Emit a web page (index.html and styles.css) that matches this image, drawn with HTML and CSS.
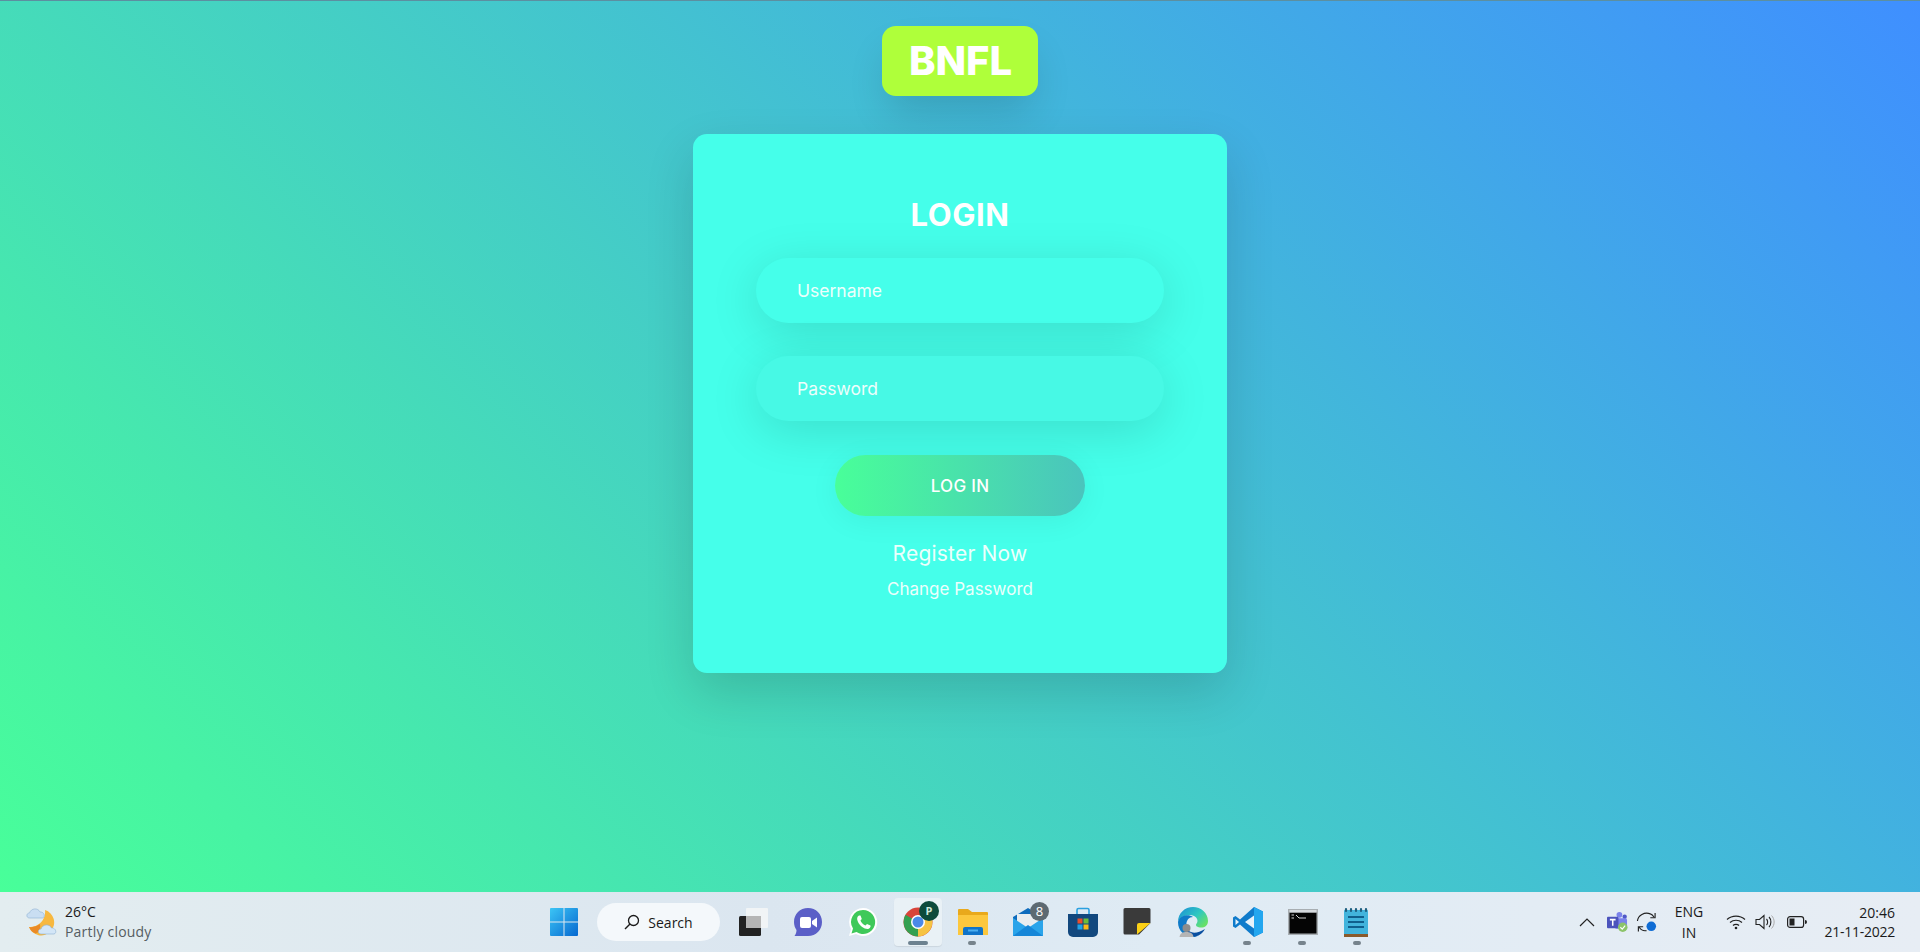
FILE: index.html
```html
<!doctype html>
<html lang="en">
<head>
	<meta charset="UTF-8">
	<title>BNFL Login</title>
	<link rel="stylesheet" href="styles.css">
</head>
<body>
	<main class="page">
		<div class="logo">BNFL</div>
		<form class="card" action="#">
			<h2 class="card-title">LOGIN</h2>
			<input class="field" type="text" placeholder="Username">
			<input class="field field-pass" type="password" placeholder="Password">
			<button class="login-btn" type="button">LOG IN</button>
			<a class="link-big" href="#">Register Now</a>
			<a class="link-small" href="#">Change Password</a>
		</form>
	</main>
	<footer class="taskbar">
		<div class="weather">
			<svg class="weather-icon" viewBox="0 0 32 32">
				<path d="M19 4 A13 13 0 1 1 3 21 A15 15 0 0 0 19 4Z" fill="#f7b83f"/>
				<path d="M3 21 A15 15 0 0 0 14 18 C15 24 12 27 9.500 27.500 C6.500 26.500 4.500 24.500 3 21Z" fill="#ea8a26"/>
				<path d="M3.500 12 C0 12 0 7 3.500 7 C5 2 12 1.500 14 6 C18 5.500 20 11 16.500 12Z" fill="#c9def2" stroke="#8fb2d4" stroke-width=".6"/>
				<path d="M15 28 C11.500 28 11.500 23 15 23 C16.500 18 23.500 17.500 25.500 22 C29.500 21.500 31.500 27 28 28Z" fill="#d3e6f7" stroke="#8fb2d4" stroke-width=".6"/>
			</svg>
			<div class="weather-text">
				<div class="temp">26°C</div>
				<div class="cond">Partly cloudy</div>
			</div>
		</div>
		<div class="apps">
			<div class="slot slot-win">
				<svg class="icon" viewBox="0 0 30 30">
					<defs>
						<linearGradient id="win" x1="0" y1="0" x2="1" y2="1"><stop offset="0" stop-color="#3cc5f5"/><stop offset="1" stop-color="#0668d0"/></linearGradient>
					</defs>
					<path d="M1 2 a1 1 0 0 1 1-1 H14.500 V14.500 H1Z M15.500 1 H28 a1 1 0 0 1 1 1 V14.500 H15.500Z M1 15.500 H14.500 V29 H2 a1 1 0 0 1-1-1Z M15.500 15.500 H29 V28 a1 1 0 0 1-1 1 H15.500Z" fill="url(#win)"/>
				</svg>
			</div>
			<div class="search">
				<svg class="search-icon" viewBox="0 0 16 16"><circle cx="9.500" cy="6.500" r="5" fill="none" stroke="#1a1a1a" stroke-width="1.300"/><path d="M6 10 L1 15" stroke="#1a1a1a" stroke-width="1.500"/></svg>
				<span>Search</span>
			</div>
			<div class="slot">
				<svg class="icon" viewBox="0 0 30 30">
					<rect x="1" y="9" width="22" height="20" rx="1.500" fill="#222"/>
					<rect x="8" y="1" width="22" height="20" rx="1" fill="#f1f4f6"/>
					<rect x="8" y="9" width="15" height="12" fill="#b5b5b5"/>
				</svg>
			</div>
			<div class="slot">
				<svg class="icon" viewBox="0 0 30 30">
					<path d="M15 1 C23 1 29 7 29 15 C29 23 23 29 15 29 H1.500 C3 27 3.500 25 3.500 23 C2 21 1 18 1 15 C1 7 7 1 15 1Z" fill="#5b5fc7"/>
					<rect x="7" y="10" width="11" height="11" rx="2" fill="#fff"/>
					<path d="M19 14 L24 10.500 V20.500 L19 17Z" fill="#fff"/>
				</svg>
			</div>
			<div class="slot">
				<svg class="icon" viewBox="0 0 30 30">
					<path d="M15 1 A14 14 0 1 1 8 27 L1 29 L3 22 A14 14 0 0 1 15 1Z" fill="#fff"/>
					<path d="M15 3 A12 12 0 1 1 8.500 25 L3.500 26.500 L5 21.500 A12 12 0 0 1 15 3Z" fill="#3fc95a"/>
					<path d="M11 8.500 C9 9.500 8.500 12 10 15 C12 19 16 22 19.500 22 C21.500 22 23 20 22.500 18.500 L19 17 L17.500 18.500 C15.500 18 13 15.500 12.500 13.500 L13.800 12 L12.500 8.500Z" fill="#fff"/>
				</svg>
			</div>
			<div class="slot slot-open">
				<svg class="icon" viewBox="0 0 30 30">
					<circle cx="15" cy="15" r="14.500" fill="#d9443a"/>
					<path d="M15 15 L27.500 7.800 A14.500 14.500 0 0 1 15 29.500Z" fill="#f6c343"/>
					<path d="M15 15 L15 29.500 A14.500 14.500 0 0 1 2.500 7.800Z" fill="#34a050"/>
					<circle cx="15" cy="15" r="7" fill="#fff"/>
					<circle cx="15" cy="15" r="5.500" fill="#4a89e8"/>
				</svg>
				<span class="profile">P</span>
				<span class="dash"></span>
			</div>
			<div class="slot slot-run">
				<svg class="icon" viewBox="0 0 30 30">
					<path d="M0 3 a1 1 0 0 1 1-1 H10 L14 5 H29 a1 1 0 0 1 1 1 V10 H0Z" fill="#e9a91c"/>
					<path d="M0 8 H30 V28 H0Z" fill="#fcc73d"/>
					<path d="M5 28 V22 a2 2 0 0 1 2-2 H23 a2 2 0 0 1 2 2 V28Z" fill="#0f73c9"/>
					<rect x="10" y="22.500" width="10" height="2" fill="#4aaef0"/>
				</svg>
				<span class="dot"></span>
			</div>
			<div class="slot">
				<svg class="icon" viewBox="0 0 30 30">
					<path d="M0 10 L15 1 L30 10 V29 H0Z" fill="#0f6cbd"/>
					<path d="M4 7 H27 V19 L15 25 L4 19Z" fill="#e9edf0"/>
					<path d="M0 11 L15 21 L30 11 V29 H0Z" fill="#2aa4ea"/>
					<path d="M0 29 L15 18 L30 29Z" fill="#1586d8"/>
				</svg>
				<span class="badge">8</span>
			</div>
			<div class="slot">
				<svg class="icon" viewBox="0 0 30 30">
					<path d="M9 7 V3 a1.500 1.500 0 0 1 1.500-1.500 H19.500 A1.500 1.500 0 0 1 21 3 V7" fill="none" stroke="#2aa0e0" stroke-width="1.600"/>
					<path d="M0 7 H30 V25 a5 5 0 0 1-5 5 H5 a5 5 0 0 1-5-5Z" fill="#12487e"/>
					<rect x="9.500" y="11.500" width="5" height="5" fill="#ea4e2c"/>
					<rect x="15.500" y="11.500" width="5" height="5" fill="#6cbc3a"/>
					<rect x="9.500" y="17.500" width="5" height="5" fill="#20a4e8"/>
					<rect x="15.500" y="17.500" width="5" height="5" fill="#fcb815"/>
				</svg>
			</div>
			<div class="slot">
				<svg class="icon" viewBox="0 0 30 30">
					<path d="M2 1 H26 a1.500 1.500 0 0 1 1.500 1.500 V16 L16 27.500 H2 A1.500 1.500 0 0 1 .5 26 V2.500 A1.500 1.500 0 0 1 2 1Z" fill="#3a3a3a"/>
					<path d="M14 27.500 V18 a2 2 0 0 1 2-2 H27.500Z" fill="#fcd116"/>
				</svg>
			</div>
			<div class="slot">
				<svg class="icon" viewBox="0 0 30 30">
					<defs>
						<linearGradient id="edge" x1="0" y1="0" x2="1" y2="0.700"><stop offset="0" stop-color="#1a8ad8"/><stop offset=".6" stop-color="#2ec8c0"/><stop offset="1" stop-color="#68e068"/></linearGradient>
					</defs>
					<path d="M15 0 C23 0 30 6 30 14 C30 19 26 21 22 20.500 C18 20 17 18 19 16 C21 12 17 8 12 8 C6 8 1 11 0 15 C0 6 7 0 15 0Z" fill="url(#edge)"/>
					<path d="M0 15 C1 9 10 6 15 10 C10 10 7 15 9 21 C10.500 26 15 30 20 29.500 C10 32 0 26 0 15Z" fill="#0f7ac8"/>
					<path d="M9 21 C11 27 19 27 27 22 C24 27 20 30 14 29.500 C11 29 9 25 9 21Z" fill="#0a4fa0"/>
					<circle cx="8.500" cy="21" r="4" fill="#8c8c8c"/>
					<path d="M1.500 30 C2 26 5 25 8.500 25 C12 25 15 26 15.500 30Z" fill="#b4b4b4"/>
				</svg>
			</div>
			<div class="slot slot-run">
				<svg class="icon" viewBox="0 0 30 30">
					<path d="M21 0 L30 4.500 V25.500 L21 30 L7 17.500 L2.500 21 L0 19.500 V10.500 L2.500 9 L7 12.500Z" fill="#0f7bcb"/>
					<path d="M21 0 L30 4.500 V25.500 L21 30Z" fill="#23a6ef"/>
					<path d="M21 8.500 V21.500 L12 15Z" fill="#fff" opacity=".9"/>
					<path d="M2.500 12 L6 15 L2.500 18Z" fill="#fff" opacity=".9"/>
				</svg>
				<span class="dot"></span>
			</div>
			<div class="slot slot-run">
				<svg class="icon" viewBox="0 0 30 30">
					<rect x="0" y="2" width="30" height="26" fill="#a8aeb2"/>
					<rect x="1.500" y="5.500" width="27" height="21" fill="#050505"/>
					<rect x="1.500" y="3" width="27" height="2.500" fill="#d6dade"/>
					<path d="M3.500 8 H6 M3.500 11 H6 M8 8 L11 11 H18" stroke="#d0d0d0" stroke-width="1"/>
				</svg>
				<span class="dot"></span>
			</div>
			<div class="slot slot-run">
				<svg class="icon" viewBox="0 0 30 30">
					<rect x="1" y="3" width="24" height="26" fill="#42b4dc" rx="1"/>
					<rect x="1" y="27" width="24" height="3" fill="#8a5a2b"/>
					<path d="M3 2 V4 M8 2 V4 M13 2 V4 M18 2 V4 M23 2 V4" stroke="#1d5f80" stroke-width="2.200" stroke-linecap="round"/>
					<path d="M5 10 H21 M5 15 H21 M5 20 H21" stroke="#0f5f8c" stroke-width="1.800"/>
				</svg>
				<span class="dot"></span>
			</div>
		</div>
		<div class="tray">
			<svg class="tray-icon tray-chevron" viewBox="0 0 16 16"><path d="M1 12 L8 5 L15 12" fill="none" stroke="#222" stroke-width="1.200"/></svg>
			<svg class="tray-icon tray-teams" viewBox="0 0 22 22">
				<circle cx="13" cy="3.500" r="3" fill="#7b83eb"/>
				<circle cx="18.500" cy="5.500" r="2.300" fill="#5059c9"/>
				<rect x="8" y="7" width="13" height="11" rx="2" fill="#7b83eb"/>
				<rect x="0" y="5.500" width="12" height="12" rx="1" fill="#4b53bc"/>
				<path d="M3 8.500 H9 M6 8.500 V15" stroke="#fff" stroke-width="1.600"/>
				<circle cx="16.500" cy="16.500" r="5" fill="#8cc46a"/>
				<path d="M14 16.500 L16 18.500 L19 14.800" fill="none" stroke="#fff" stroke-width="1.200"/>
			</svg>
			<svg class="tray-icon tray-sync" viewBox="0 0 22 22">
				<path d="M1.500 10 C2 4 9 0 15 2.500 C16.500 3 18 4.500 19 6" fill="none" stroke="#222" stroke-width="1.200"/>
				<path d="M20 1.500 V6.500 H15" fill="none" stroke="#222" stroke-width="1.200"/>
				<path d="M11 20 C8 20.500 5 19 3.500 16.500 M2.500 21 V16 H7.500" fill="none" stroke="#222" stroke-width="1.200"/>
				<circle cx="16" cy="15.500" r="5" fill="#0f6cd4"/>
			</svg>
			<div class="lang"><div>ENG</div><div>IN</div></div>
			<svg class="tray-icon tray-wifi" viewBox="0 0 20 16">
				<path d="M1 5.500 C6 1 14 1 19 5.500 M4 8.500 C7.500 5.500 12.500 5.500 16 8.500 M7 11.500 C8.500 10 11.500 10 13 11.500" fill="none" stroke="#222" stroke-width="1.200"/>
				<circle cx="10" cy="14" r="1.300" fill="#222"/>
			</svg>
			<svg class="tray-icon tray-sound" viewBox="0 0 20 16">
				<path d="M1 5.500 H4.500 L9 1.500 V14.500 L4.500 10.500 H1Z" fill="none" stroke="#222" stroke-width="1.100"/>
				<path d="M11.500 5 C13 6.500 13 9.500 11.500 11 M14 3 C16.500 5.500 16.500 10.500 14 13" fill="none" stroke="#222" stroke-width="1.100"/>
				<path d="M16.500 1.500 C20 5 20 11 16.500 14.500" fill="none" stroke="#aaa" stroke-width="1"/>
			</svg>
			<svg class="tray-icon tray-batt" viewBox="0 0 20 12">
				<rect x=".6" y=".6" width="16" height="10.800" rx="2.500" fill="none" stroke="#222" stroke-width="1.200"/>
				<rect x="2.500" y="2.500" width="5" height="7" fill="#222"/>
				<path d="M18 4 a2 2 0 0 1 0 4Z" fill="#222"/>
			</svg>
			<div class="clock"><div>20:46</div><div class="date">21-11-2022</div></div>
		</div>
	</footer>
</body>
</html>
```

FILE: styles.css
```css
* { box-sizing: border-box; }
html, body { height: 100%; }
body { margin: 0; display: flex; flex-direction: column; height: 952px; overflow: hidden; font-family: "Inter", "Liberation Sans", sans-serif; }

.page { flex: 1; display: flex; flex-direction: column; align-items: center; padding-top: 26px; background: linear-gradient(45deg, #48ff99, #3f8fff); border-top: 1px solid #5c8fa0; }
.logo { width: 156px; height: 70px; line-height: 70px; margin-top: -1px; padding-left: 1px; text-align: center; color: #fff; font-size: 40px; font-weight: 800; background: #afff3a; border-radius: 14px; box-shadow: 0 22px 40px -6px rgba(0,0,0,.14); }

.card { width: 534px; height: 539px; margin-top: 38px; padding-top: 64px; display: flex; flex-direction: column; align-items: center; background: #45ffea; border-radius: 14px; box-shadow: 0 20px 50px rgba(0,0,0,.14); }
.card-title { margin: 0 0 27px; color: #fff; font-size: 31px; line-height: 33px; font-weight: 700; letter-spacing: .6px; }

.field { display: block; width: 408px; height: 65px; margin-bottom: 33px; padding: 0 41px; border: none; outline: none; border-radius: 33px; background: #45ffea; color: #fff; font-family: inherit; font-size: 17.500px; box-shadow: 0 10px 50px rgba(0,0,0,.13); }
.field-pass { margin-bottom: 34px; background: #47f9e5; }
.field::placeholder { color: #fff; opacity: .9; }

.login-btn { width: 250px; height: 61px; margin-bottom: 24px; border: none; border-radius: 31px; background: linear-gradient(90deg, #48ff99, #4ac4bd); color: #fff; font-family: inherit; font-size: 17px; font-weight: 500; letter-spacing: .3px; box-shadow: 0 5px 30px rgba(0,0,0,.06); }

.link-big { color: #fff; font-size: 21px; line-height: 28px; letter-spacing: .2px; text-decoration: none; opacity: .9; }
.link-small { margin-top: 9px; color: #fff; font-size: 17px; line-height: 24px; text-decoration: none; opacity: .9; }

.taskbar { height: 60px; display: flex; align-items: center; font-family: "Open Sans", "Noto Sans", sans-serif; color: #1a1a1a; background: linear-gradient(90deg, #e3edf0, #dbe6f0 40%, #dfebf4 60%, #e7edf4); }

.weather { width: 536px; flex: none; display: flex; align-items: center; padding-left: 26px; }
.weather-icon { width: 32px; height: 32px; margin-right: 7px; }
.temp { font-size: 14px; line-height: 20px; }
.cond { font-size: 14px; line-height: 20px; letter-spacing: .2px; color: #555d62; }

.apps { display: flex; align-items: center; flex: none; }
.slot { position: relative; width: 55px; height: 48px; display: flex; align-items: center; justify-content: center; }
.slot-win { width: 56px; }
.icon { width: 30px; height: 30px; }
.search { width: 123px; height: 38px; margin: 0 5px 0 5px; display: flex; align-items: center; justify-content: center; gap: 8px; font-size: 14px; background: #f4f8fb; border-radius: 19px; }
.search-icon { width: 16px; height: 16px; }
.slot-open { background: #e9f1f6; border-radius: 4px; box-shadow: 0 1px 1px rgba(0,0,0,.08); width: 48px; margin: 0 3px 0 4px; }
.profile { position: absolute; top: 3px; right: 3px; width: 20px; height: 20px; border-radius: 50%; background: #0d4a3c; color: #cfe8dc; font-size: 11px; font-weight: 700; line-height: 20px; text-align: center; }
.dash { position: absolute; bottom: 1px; left: 14px; width: 20px; height: 4px; border-radius: 2px; background: #6d8290; }
.dot { position: absolute; bottom: 1px; left: 23px; width: 8px; height: 4px; border-radius: 2px; background: #76838c; }
.badge { position: absolute; top: 4px; left: 30px; width: 19px; height: 19px; border-radius: 50%; background: #5d6a72; color: #fff; font-size: 13px; line-height: 19px; text-align: center; }

.tray { flex: 1; display: flex; align-items: center; color: #1a1a1a; }
.tray-icon { flex: none; }
.tray-chevron { width: 16px; height: 16px; margin-left: 194px; }
.tray-teams { width: 21px; height: 22px; margin-left: 12px; }
.tray-sync { width: 21px; height: 22px; margin-left: 8px; }
.lang { width: 34px; margin-left: 15px; text-align: center; font-size: 14px; line-height: 21px; }
.tray-wifi { width: 20px; height: 16px; margin-left: 20px; }
.tray-sound { width: 20px; height: 16px; margin-left: 9px; }
.tray-batt { width: 20px; height: 12px; margin-left: 12px; }
.clock { flex: 1; padding-right: 25px; text-align: right; font-size: 14px; line-height: 19px; }
.date { letter-spacing: -.25px; }
```
